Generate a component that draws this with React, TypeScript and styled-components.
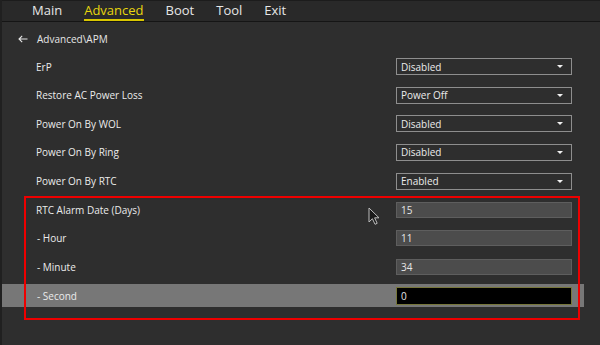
import styled, { createGlobalStyle } from 'styled-components';

type Item = {
  label: string;
  kind: 'select' | 'number';
  value: string;
  sub?: boolean;
  active?: boolean;
};

const TABS = ['Main', 'Advanced', 'Boot', 'Tool', 'Exit'];

const ITEMS: Item[] = [
  { label: 'ErP', kind: 'select', value: 'Disabled' },
  { label: 'Restore AC Power Loss', kind: 'select', value: 'Power Off' },
  { label: 'Power On By WOL', kind: 'select', value: 'Disabled' },
  { label: 'Power On By Ring', kind: 'select', value: 'Disabled' },
  { label: 'Power On By RTC', kind: 'select', value: 'Enabled' },
  { label: 'RTC Alarm Date (Days)', kind: 'number', value: '15' },
  { label: '- Hour', kind: 'number', value: '11', sub: true },
  { label: '- Minute', kind: 'number', value: '34', sub: true },
  { label: '- Second', kind: 'number', value: '0', sub: true, active: true },
];

export default function App() {
  return (
    <>
      <GlobalStyle />
      <Screen>
        <TopBar>
          {TABS.map((tab) => (
            <Tab key={tab} $current={tab === 'Advanced'}>
              {tab}
            </Tab>
          ))}
        </TopBar>
        <Crumb>
          <BackArrow viewBox="0 0 10 8">
            <path d="M9.5 4H1M4.2 0.8L1 4l3.2 3.2" />
          </BackArrow>
          <span>Advanced\APM</span>
        </Crumb>
        <List>
          {ITEMS.map((item) => (
            <Row key={item.label} $active={!!item.active}>
              <Label $sub={!!item.sub}>{item.label}</Label>
              {item.kind === 'select' ? (
                <Select>
                  <span>{item.value}</span>
                  <Caret />
                </Select>
              ) : (
                <NumberField $active={!!item.active}>{item.value}</NumberField>
              )}
            </Row>
          ))}
        </List>
        <Marker />
        <Pointer viewBox="0 0 12 18">
          <path
            d="M1 1v14l3.4-3.3 2.6 5.6 2.2-1-2.6-5.5H11L1 1z"
            fill="#1a1a1a"
            stroke="#bdbdbd"
            strokeWidth="1"
          />
        </Pointer>
      </Screen>
    </>
  );
}

const GlobalStyle = createGlobalStyle`
  html, body {
    margin: 0;
    padding: 0;
    background: #2d2d2d;
  }
  body {
    font-family: 'Open Sans', 'Noto Sans', sans-serif;
  }
`;

const Screen = styled.div`
  position: relative;
  width: 600px;
  height: 345px;
  overflow: hidden;
  background: #2e2e2e;
  border-left: 2px solid #202020;
  box-sizing: border-box;
  color: #e2e2e2;
`;

const TopBar = styled.nav`
  display: flex;
  align-items: flex-start;
  gap: 22px;
  height: 22px;
  padding-left: 30px;
  padding-top: 1px;
  background: #292929;
  border-top: 1px solid #1c1c1c;
  border-bottom: 1px solid #151515;
  box-sizing: border-box;
`;

const Tab = styled.div<{ $current: boolean }>`
  font-size: 13px;
  line-height: 17px;
  color: ${(p) => (p.$current ? '#e8d60e' : '#e6e6e6')};
  border-bottom: ${(p) => (p.$current ? '2px solid #d9c600' : '2px solid transparent')};
`;

const Crumb = styled.div`
  display: flex;
  align-items: center;
  gap: 9px;
  height: 33px;
  padding-left: 16px;
  font-size: 10px;
  color: #e6e6e6;
`;

const BackArrow = styled.svg`
  width: 10px;
  height: 8px;
  fill: none;
  stroke: #e6e6e6;
  stroke-width: 1.1;
`;

const List = styled.div`
  display: flex;
  flex-direction: column;
  gap: 5.625px;
  width: 582px;
`;

const Row = styled.div<{ $active: boolean }>`
  display: grid;
  grid-template-columns: 360px 176px;
  align-items: center;
  height: 23px;
  padding-left: 34px;
  background: ${(p) => (p.$active ? '#777777' : 'transparent')};
`;

const Label = styled.div<{ $sub: boolean }>`
  font-size: 10px;
  color: #ebebeb;
  padding-left: ${(p) => (p.$sub ? '1px' : '0')};
  white-space: pre;
`;

const Select = styled.div`
  display: flex;
  align-items: center;
  justify-content: space-between;
  height: 17px;
  padding: 0 8px 0 4px;
  border: 1px solid #8e8e8e;
  box-sizing: border-box;
  font-size: 10px;
  color: #ebebeb;
`;

const Caret = styled.span`
  width: 0;
  height: 0;
  border-left: 3px solid transparent;
  border-right: 3px solid transparent;
  border-top: 3px solid #f0f0f0;
`;

const NumberField = styled.div<{ $active: boolean }>`
  display: flex;
  align-items: center;
  height: ${(p) => (p.$active ? '18px' : '16px')};
  padding-left: 4px;
  box-sizing: border-box;
  font-size: 10px;
  color: #e6e6e6;
  background: ${(p) => (p.$active ? '#000000' : '#4c4c4c')};
  border: 1px solid ${(p) => (p.$active ? '#77763a' : '#5e5e5e')};
`;

const Marker = styled.div`
  position: absolute;
  left: 22px;
  top: 196px;
  width: 556px;
  height: 124px;
  border: 2px solid #ee0000;
  box-sizing: border-box;
  pointer-events: none;
`;

const Pointer = styled.svg`
  position: absolute;
  left: 366px;
  top: 207px;
  width: 12px;
  height: 18px;
`;
